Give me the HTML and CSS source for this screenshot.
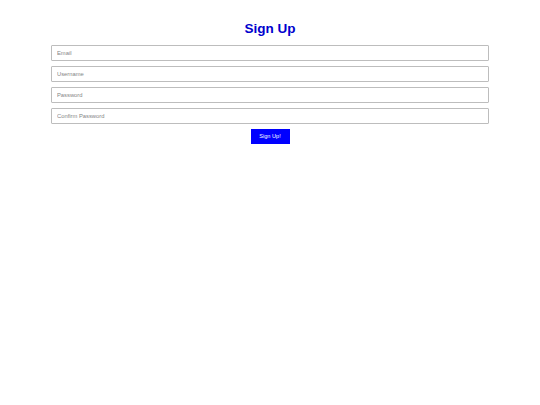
FILE: index.html
```html
<!DOCTYPE html>
<html>
<head>
<meta charset="utf-8">
<link rel="stylesheet" href="styles.css">
</head>
<body>
<div class="page">
  <h1 class="title">Sign Up</h1>
  <form class="form">
    <input class="field" type="email" placeholder="Email">
    <input class="field" type="text" placeholder="Username">
    <input class="field" type="password" placeholder="Password">
    <input class="field" type="password" placeholder="Confirm Password">
    <button class="submit" type="button">Sign Up!</button>
  </form>
</div>
</body>
</html>
```
FILE: styles.css
```css
html, body {
  margin: 0;
  padding: 0;
  background: #ffffff;
}
body {
  font-family: "Liberation Sans", Arial, sans-serif;
}
.page {
  width: 438px;
  margin: 0 auto;
  padding-top: 20px;
  display: flex;
  flex-direction: column;
  align-items: stretch;
}
.title {
  margin: 0 0 8px 0;
  font-size: 13.5px;
  line-height: 17px;
  font-weight: bold;
  color: #0000cd;
  text-align: center;
}
.form {
  display: flex;
  flex-direction: column;
  gap: 4.8px;
  margin: 0;
}
.field {
  box-sizing: border-box;
  height: 16.2px;
  width: 100%;
  margin: 0;
  padding: 0 5px;
  border: 1px solid #bdbdbd;
  border-radius: 1px;
  font-family: "Liberation Sans", Arial, sans-serif;
  font-size: 5.8px;
  color: #333;
  background: #fff;
}
.field::placeholder {
  color: #858585;
}
.submit {
  align-self: center;
  box-sizing: border-box;
  width: 39px;
  height: 15px;
  margin: 0;
  padding: 0;
  border: none;
  background: #0000ff;
  color: #ffffff;
  font-family: "Liberation Sans", Arial, sans-serif;
  font-size: 5.6px;
  font-weight: normal;
}
```
